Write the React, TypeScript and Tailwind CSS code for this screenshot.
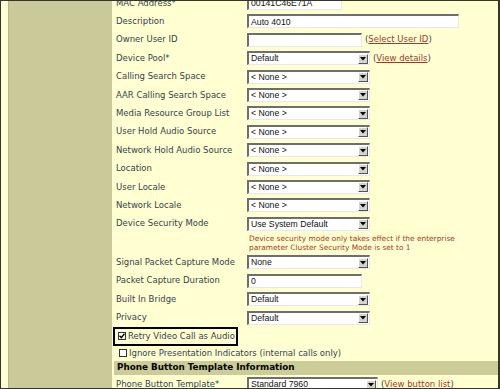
import React from "react";

const LABEL = "text-[#34434d]";

function Select({ value, w = "w-[123px]" }: { value: string; w?: string }) {
  return (
    <div
      className={`${w} h-[14px] flex items-center bg-white border-t-2 border-l-2 border-t-[#6e6e6e] border-l-[#6e6e6e] border-b border-r border-b-[#e8e8e8] border-r-[#e8e8e8]`}
    >
      <span className="flex-1 pl-[2px] text-[8.7px] leading-none text-[#111] font-['Liberation_Sans',Arial,sans-serif]">
        {value}
      </span>
      <div className="w-[10px] h-[10px] mr-[1px] bg-[#d6d3ce] border border-t-white border-l-white border-b-[#555] border-r-[#555] flex items-center justify-center">
        <svg width="6" height="4" viewBox="0 0 6 4">
          <path d="M0 0h6L3 3.5z" fill="#000" />
        </svg>
      </div>
    </div>
  );
}

function TextInput({ value = "", w }: { value?: string; w: string }) {
  return (
    <div
      className={`${w} h-[14px] flex items-center bg-white border-t-2 border-l-2 border-t-[#6e6e6e] border-l-[#6e6e6e] border-b border-r border-b-[#e8e8e8] border-r-[#e8e8e8]`}
    >
      <span className="pl-[2px] text-[8.7px] leading-none text-[#111] font-['Liberation_Sans',Arial,sans-serif]">
        {value}
      </span>
    </div>
  );
}

function Link({ text }: { text: string }) {
  return (
    <span className={`ml-[3px] text-[8.5px] ${LABEL}`}>
      (<span className="text-[#a3372c] underline">{text}</span>)
    </span>
  );
}

function Row({
  label,
  children,
  h = "h-[18.4px]",
}: {
  label: string;
  children?: React.ReactNode;
  h?: string;
}) {
  return (
    <div className={`flex items-center ${h}`}>
      <div className={`w-[135px] pl-[4px] text-[8.5px] whitespace-nowrap ${LABEL}`}>{label}</div>
      <div className="flex items-center">{children}</div>
    </div>
  );
}

function Check({ checked }: { checked?: boolean }) {
  return (
    <div className="w-[8px] h-[8px] bg-white border border-[#333] flex items-center justify-center">
      {checked && (
        <svg width="6" height="6" viewBox="0 0 6 6">
          <path d="M0.5 2.8l1.8 1.8L5.5 0.8" stroke="#000" strokeWidth="1.4" fill="none" />
        </svg>
      )}
    </div>
  );
}

export default function App() {
  const noneRows = [
    "Calling Search Space",
    "AAR Calling Search Space",
    "Media Resource Group List",
    "User Hold Audio Source",
    "Network Hold Audio Source",
    "Location",
    "User Locale",
    "Network Locale",
  ];

  return (
    <div className="w-[500px] h-[389px] overflow-hidden bg-[#ffffd2] border-t border-b border-l border-r-2 border-[#35352a] flex font-['DejaVu_Sans',Verdana,sans-serif]">
      <div className="w-[7px] bg-[#ffffd6]" />
      <div className="w-[1px] bg-[#b5b586]" />
      <div className="w-[103px] bg-[#c9c99a]" />

      <div className="flex-1 mt-[-7.2px]">
        <Row label="MAC Address*">
          <TextInput value="00141C46E71A" w="w-[95px]" />
        </Row>
        <Row label="Description">
          <TextInput value="Auto 4010" w="w-[212px]" />
        </Row>
        <Row label="Owner User ID">
          <TextInput w="w-[115px]" />
          <Link text="Select User ID" />
        </Row>
        <Row label="Device Pool*">
          <Select value="Default" />
          <Link text="View details" />
        </Row>
        {noneRows.map((l) => (
          <Row key={l} label={l}>
            <Select value="< None >" />
          </Row>
        ))}
        <Row label="Device Security Mode">
          <Select value="Use System Default" />
        </Row>
        <div className="h-[20px] pt-[2.5px] pl-[137px] text-[7.4px] leading-[8.4px] text-[#a43a24] whitespace-nowrap">
          <div>Device security mode only takes effect if the enterprise</div>
          <div>parameter Cluster Security Mode is set to 1</div>
        </div>
        <Row label="Signal Packet Capture Mode" h="h-[18.5px]">
          <Select value="None" />
        </Row>
        <Row label="Packet Capture Duration" h="h-[18.5px]">
          <TextInput value="0" w="w-[115px]" />
        </Row>
        <Row label="Built In Bridge" h="h-[18.5px]">
          <Select value="Default" />
        </Row>
        <Row label="Privacy" h="h-[18.5px]">
          <Select value="Default" />
        </Row>

        <div className="ml-[1px] w-[125px] h-[19px] border-2 border-black flex items-center pl-[3px] gap-[2px]">
          <Check checked />
          <span className={`text-[8.5px] whitespace-nowrap ${LABEL}`}>Retry Video Call as Audio</span>
        </div>
        <div className="h-[14px] flex items-center pl-[7px] gap-[2px]">
          <Check />
          <span className={`text-[8.5px] whitespace-nowrap ${LABEL}`}>
            Ignore Presentation Indicators (internal calls only)
          </span>
        </div>
        <div className="ml-[2px] mt-[1px] h-[14.3px] bg-[#cccc99] flex items-center pl-[3px] text-[8.8px] font-bold text-black whitespace-nowrap">
          Phone Button Template Information
        </div>
        <Row label="Phone Button Template*" h="h-[18px]">
          <Select value="Standard 7960" w="w-[131px]" />
          <Link text="View button list" />
        </Row>
      </div>
    </div>
  );
}
